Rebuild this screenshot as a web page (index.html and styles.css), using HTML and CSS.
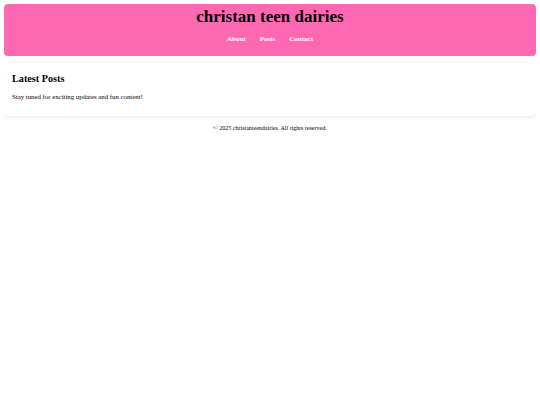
FILE: index.html
```html
<!DOCTYPE html>
<html lang="en">
<head>
    <meta charset="UTF-8">
    <meta name="viewport" content="width=device-width, initial-scale=1.0">
    <title>christan teen dairies</title>
    <link rel="stylesheet" href="styles.css">
</head>
<body>
    <header class="site-header">
        <h1>christan teen dairies</h1>
        <nav class="nav">
            <a href="#">About</a>
            <a href="#">Posts</a>
            <a href="#">Contact</a>
        </nav>
    </header>

    <main class="post-card">
        <h2>Latest Posts</h2>
        <p>Stay tuned for exciting updates and fun content!</p>
    </main>

    <footer class="site-footer">
        <p>&copy; 2025 christanteendairies. All rights reserved.</p>
    </footer>
</body>
</html>
```

FILE: styles.css
```css
* {
    box-sizing: border-box;
    margin: 0;
    padding: 0;
}

body {
    margin: 4px;
    font-family: "Liberation Serif", "Times New Roman", serif;
    color: #000;
    background: #fff;
}

.site-header {
    background: #ff69b4;
    border-radius: 4px;
    padding: 3px 0 13px;
    text-align: center;
}

.site-header h1 {
    font-size: 17px;
    line-height: 20px;
}

.nav {
    display: flex;
    justify-content: center;
    gap: 14px;
    margin-top: 8px;
    line-height: 8px;
}

.nav a {
    color: white;
    text-decoration: none;
    font-size: 7px;
    font-weight: bold;
}

.post-card {
    margin-top: 7px;
    background: white;
    border-radius: 4px;
    box-shadow: 0 1px 4px rgba(0, 0, 0, 0.1);
    padding: 10px 8px 15px;
}

.post-card h2 {
    font-size: 10.2px;
    line-height: 12px;
    margin-bottom: 8px;
}

.post-card p {
    font-size: 6.8px;
    line-height: 8px;
}

.site-footer {
    text-align: center;
    font-size: 6px;
    line-height: 8px;
    margin-top: 8px;
}
```
